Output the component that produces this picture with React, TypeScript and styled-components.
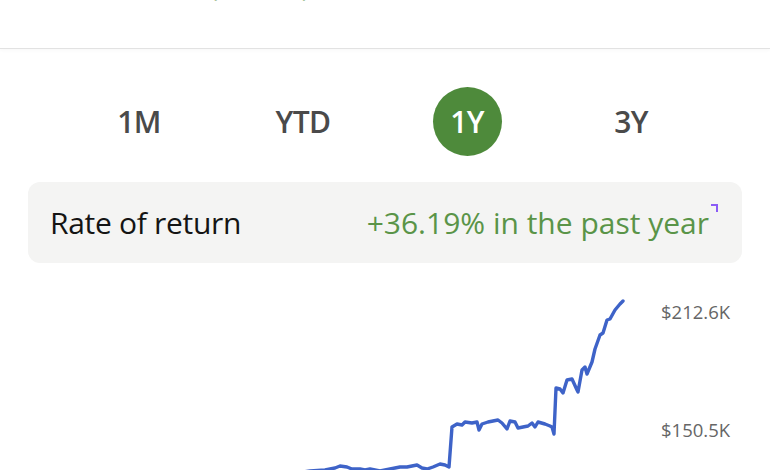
import styled, { createGlobalStyle } from 'styled-components';

const GlobalStyle = createGlobalStyle`
  body {
    margin: 0;
    background: #ffffff;
    font-family: "Open Sans", Lato, "Liberation Sans", sans-serif;
    overflow: hidden;
  }
`;

const periods = ['1M', 'YTD', '1Y', '3Y'];

// page coordinates of the performance line, traced from the 1Y view
const points: [number, number][] = [
  [296, 473], [310, 471], [325, 470], [335, 468], [340, 466], [347, 467], [352, 469],
  [360, 469], [365, 470], [370, 469], [380, 471], [390, 469], [395, 468], [400, 467],
  [407, 467], [412, 466], [417, 465], [422, 468], [427, 469], [433, 467], [440, 464],
  [445, 465], [449, 467], [452, 427], [457, 424], [462, 425], [465, 422], [472, 423],
  [477, 422], [479, 430], [482, 424], [488, 422], [493, 421], [498, 420], [502, 423],
  [507, 429], [510, 421], [515, 422], [518, 428], [523, 427], [528, 426], [532, 423],
  [535, 427], [538, 422], [545, 424], [550, 426], [552, 427], [554, 434], [556, 388],
  [560, 389], [563, 393], [567, 380], [572, 379], [577, 390], [578, 392], [582, 370],
  [585, 367], [587, 374], [592, 362], [595, 349], [600, 335], [603, 333], [607, 320],
  [610, 319], [615, 310], [620, 304], [623, 301],
];

export default function App() {
  const line = points.map(([x, y], i) => `${i ? 'L' : 'M'}${x} ${y}`).join(' ');

  return (
    <>
      <GlobalStyle />
      <Page>
        <Header>
          <GainText>+$56,597.23 (36.19%)</GainText>
        </Header>

        <Periods>
          {periods.map((p) => (
            <PeriodItem key={p}>
              <PeriodLabel $active={p === '1Y'}>{p}</PeriodLabel>
            </PeriodItem>
          ))}
        </Periods>

        <ReturnCard>
          <CardTitle>Rate of return</CardTitle>
          <CardValue>+36.19% in the past year</CardValue>
          <CornerMark />
        </ReturnCard>

        <Chart>
          <Plot viewBox="0 263 660 207" preserveAspectRatio="none">
            <path
              d={line}
              fill="none"
              stroke="#3e63c8"
              strokeWidth="3.4"
              strokeLinejoin="round"
              strokeLinecap="round"
            />
          </Plot>
          <Axis>
            <AxisLabel>$212.6K</AxisLabel>
            <AxisLabel>$150.5K</AxisLabel>
          </Axis>
        </Chart>
      </Page>
    </>
  );
}

const Page = styled.div`
  width: 770px;
  height: 470px;
  overflow: hidden;
`;

const Header = styled.header`
  height: 48px;
  overflow: hidden;
  border-bottom: 1px solid #e2e2e2;
  box-shadow: 0 2px 3px rgba(0, 0, 0, 0.025);
`;

const GainText = styled.div`
  margin-top: -29px;
  padding-left: 62px;
  font-size: 25px;
  line-height: 30px;
  color: #5a9448;
  white-space: nowrap;
`;

const Periods = styled.nav`
  display: flex;
  margin-top: 38px;
  padding-left: 57px;
`;

const PeriodItem = styled.div`
  display: flex;
  width: 164px;
  justify-content: center;
`;

const PeriodLabel = styled.span<{ $active: boolean }>`
  display: flex;
  width: 69px;
  height: 69px;
  align-items: center;
  justify-content: center;
  border-radius: 50%;
  background: ${({ $active }) => ($active ? '#4e8a3b' : 'transparent')};
  color: ${({ $active }) => ($active ? '#ffffff' : '#4a4a4a')};
  font-size: 30px;
  font-weight: 600;
  letter-spacing: -0.02em;
`;

const ReturnCard = styled.section`
  position: relative;
  display: flex;
  height: 81px;
  margin: 26px 28px 0;
  padding: 0 33px 0 22px;
  align-items: center;
  justify-content: space-between;
  border-radius: 12px;
  background: #f4f4f3;
`;

const CardTitle = styled.span`
  font-size: 30px;
  letter-spacing: -0.01em;
  color: #141414;
`;

const CardValue = styled.span`
  font-size: 30px;
  color: #5a9448;
`;

const CornerMark = styled.span`
  position: absolute;
  top: 22px;
  right: 24px;
  width: 5px;
  height: 6px;
  border-top: 2px solid #8b5cf6;
  border-right: 2px solid #8b5cf6;
`;

const Chart = styled.div`
  display: grid;
  grid-template-columns: 660px 1fr;
  height: 207px;
`;

const Plot = styled.svg`
  width: 660px;
  height: 207px;
  overflow: visible;
`;

const Axis = styled.div`
  display: flex;
  flex-direction: column;
  gap: 94px;
  padding: 37px 0 0 1px;
`;

const AxisLabel = styled.span`
  font-size: 18.5px;
  line-height: 24px;
  color: #666666;
`;
